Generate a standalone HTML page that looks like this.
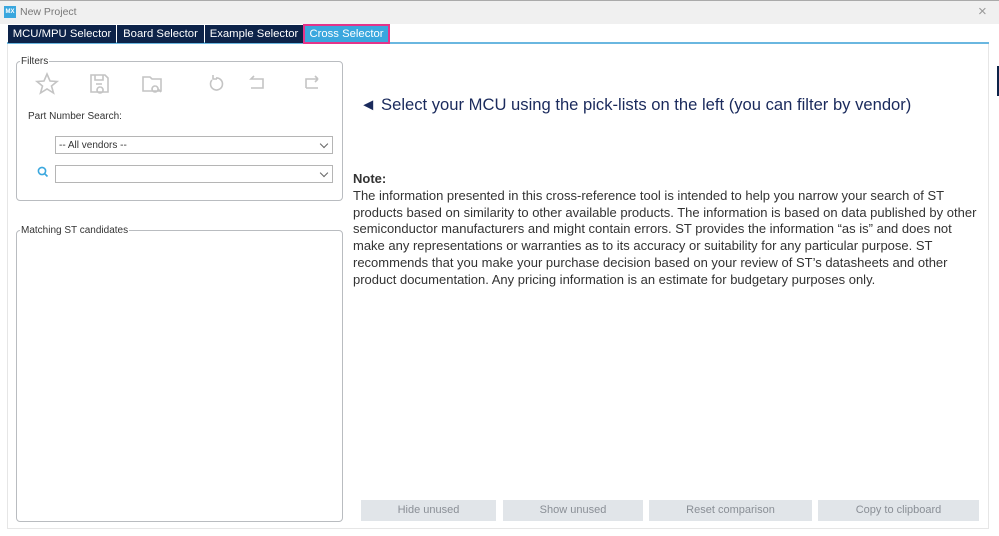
<!DOCTYPE html>
<html><head><style>
*{margin:0;padding:0;box-sizing:border-box}
body{width:999px;height:536px;background:#fff;font-family:"Liberation Sans",Arial,sans-serif;position:relative;overflow:hidden}
.abs{position:absolute}
.tab{position:absolute;top:25px;height:18px;background:#0d2349;color:#fff;font-size:11px;line-height:18px;text-align:center}
.btn{position:absolute;top:500px;height:21px;background:#e1e5e9;color:#8a8f96;font-size:11px;line-height:21px;text-align:center}
fieldset{position:absolute;border:1px solid #b9bcc0;border-radius:4px}
legend{font-size:10px;color:#333;padding:0 1px;margin-left:3px}
.sel{position:absolute;height:18px;border:1px solid #b5b5b5;font-size:10px;line-height:17px;padding-left:3px;color:#333;background:#fff}
.sel:after{content:"";position:absolute;right:5px;top:4px;width:5px;height:5px;border-right:1px solid #666;border-bottom:1px solid #666;transform:rotate(45deg)}
.note{font-size:13px;color:#333;line-height:16.8px}
</style></head><body>
<div class="abs" style="left:0;top:0;width:999px;height:24px;background:#f0f0f0;border-top:1px solid #aaa"></div>
<div class="abs" style="left:4px;top:6px;width:12px;height:12px;background:#3aa7de;color:#fff;font-size:6px;font-weight:bold;line-height:12px;text-align:center">MX</div>
<div class="abs" style="left:20px;top:6px;font-size:10.5px;color:#777">New Project</div>
<div class="abs" style="left:978px;top:3px;font-size:15px;color:#999">×</div>
<div class="abs" style="left:7px;top:43px;width:982px;height:486px;border:1px solid #e6e6e6;border-top:none"></div>
<div class="abs" style="left:7px;top:42px;width:982px;height:2px;background:#6ab7e0"></div>
<div class="abs" style="left:997px;top:66px;width:2px;height:30px;background:#0d2349"></div>
<div class="tab" style="left:8px;width:108px;font-size:11.3px">MCU/MPU Selector</div>
<div class="tab" style="left:117px;width:87px;font-size:11.3px">Board Selector</div>
<div class="tab" style="left:205px;width:98px;font-size:11.3px">Example Selector</div>
<div class="tab" style="left:303px;top:24px;height:20px;width:87px;background:#3aa7de;border:2px solid #e4348a;line-height:17px;font-size:11.3px">Cross Selector</div>
<fieldset style="left:16px;top:56px;width:327px;height:145px"><legend>Filters</legend></fieldset>
<svg class="abs" style="left:30px;top:70px" width="300" height="30" fill="none" stroke="#c4c4c4" stroke-width="1.6">
<path d="M17 4l3 7 7 .5-5.5 4.5 2 7-6.5-4-6.5 4 2-7L7 11.5l7-.5z"/>
<path d="M61 5h14l3 3v14H61z M65 5v5h8V5 M66 14h6 M70 17a3 3 0 1 0 .1 0"/>
<path d="M113 7h7l2 2h9v12h-18z M125 16a3 3 0 1 0 .1 0 M128 19l3 3"/>
<path d="M182 10a6 6 0 1 0 4 -2 M183 5v4h4"/>
<path d="M225 9h-4l3-3 M221 9h12v9h-12"/>
<path d="M288 9h-12v9 M288 9l-3-3 M288 9l-3 3 M276 18h12"/>
</svg>
<div class="abs" style="left:28px;top:111px;font-size:10px;color:#333">Part Number Search:</div>
<div class="sel" style="left:55px;top:136px;width:278px">-- All vendors --</div>
<svg class="abs" style="left:37px;top:166px" width="12" height="12" fill="none" stroke="#3aa7de" stroke-width="1.6"><circle cx="5" cy="5" r="3.6"/><path d="M7.5 7.5l3 3"/></svg>
<div class="sel" style="left:55px;top:165px;width:278px"></div>
<fieldset style="left:16px;top:225px;width:327px;height:297px"><legend>Matching ST candidates</legend></fieldset>
<div class="abs" style="left:360px;top:95px;font-size:16.6px;color:#1a2a5c">◄ Select your MCU using the pick-lists on the left (you can filter by vendor)</div>
<div class="abs note" style="left:353px;top:171px;width:628px"><b>Note:</b><br>The information presented in this cross-reference tool is intended to help you narrow your search of ST products based on similarity to other available products. The information is based on data published by other semiconductor manufacturers and might contain errors. ST provides the information “as is” and does not make any representations or warranties as to its accuracy or suitability for any particular purpose. ST recommends that you make your purchase decision based on your review of ST’s datasheets and other product documentation. Any pricing information is an estimate for budgetary purposes only.</div>
<div class="btn" style="left:361px;width:135px">Hide unused</div>
<div class="btn" style="left:503px;width:140px">Show unused</div>
<div class="btn" style="left:649px;width:163px">Reset comparison</div>
<div class="btn" style="left:818px;width:161px">Copy to clipboard</div>
</body></html>
